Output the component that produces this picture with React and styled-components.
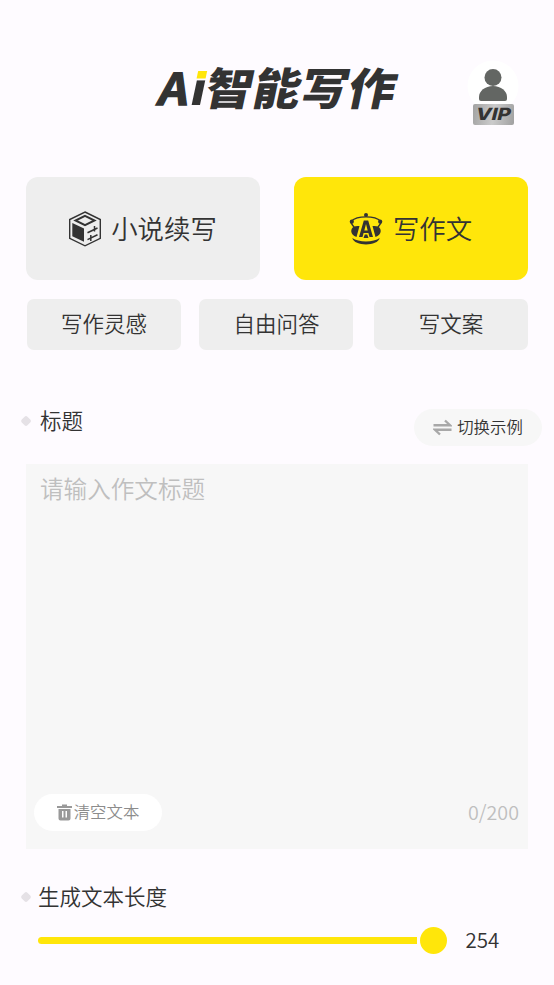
import React, { useState } from 'react';
import styled, { createGlobalStyle } from 'styled-components';

const GlobalStyle = createGlobalStyle`
  * {
    box-sizing: border-box;
  }
  body {
    margin: 0;
    background-color: #fefbff;
    color: #333;
    font-family: 'Noto Sans CJK SC', sans-serif;
    font-weight: 350;
  }
  button,
  textarea {
    border: none;
    padding: 0;
    color: inherit;
    font-family: inherit;
    font-weight: inherit;
  }
`;

const Page = styled.main`
  width: 554px;
  height: 985px;
  overflow: hidden;
`;

const Header = styled.header`
  display: flex;
  justify-content: flex-end;
  height: 177px;
  padding: 60px 35px 0 0;
`;

const Logo = styled.h1`
  display: flex;
  width: 240px;
  height: 52px;
  margin: 0 67px 0 0;
  font-size: 47.5px;
  font-weight: 900;
  line-height: 51px;
  white-space: nowrap;
  transform: skewX(-12deg) scaleY(0.93);
`;

const LogoLatin = styled.span`
  display: flex;
  width: 47px;
  font-size: 47px;
  font-weight: 700;
  letter-spacing: 2px;
  -webkit-text-stroke: 1.4px #333;
`;

/* the round dot is clipped away and a square one is put in its place */
const LogoI = styled.span`
  position: relative;
  color: transparent;
  background: linear-gradient(transparent 20px, #333 20px);
  background-clip: text;
  font-weight: 900;
  -webkit-text-stroke: 0;

  &::before {
    content: '';
    position: absolute;
    top: 10px;
    left: 3px;
    width: 9px;
    height: 8px;
    background-color: #ffe60a;
  }
`;

const Profile = styled.div`
  display: flex;
  flex-direction: column;
  align-items: center;
  width: 52px;
`;

const Avatar = styled.div`
  width: 52px;
  height: 44px;

  svg {
    display: block;
  }
`;

const VipBadge = styled.span`
  z-index: 1;
  width: 41px;
  height: 21px;
  border-radius: 2px;
  background: linear-gradient(100deg, #a2a2a2, #cbcbcb 50%, #a0a0a0);
  font: 800 17px/21px Inter, sans-serif;
  text-align: center;

  span {
    display: block;
    transform: skewX(-14deg) scaleX(1.2);
  }
`;

const ModeRow = styled.nav`
  display: flex;
  justify-content: space-between;
  padding: 0 26px;
`;

const Label = styled.span`
  display: block;
  padding-bottom: 3px;
`;

const ModeButton = styled.button`
  display: flex;
  align-items: center;
  justify-content: center;
  gap: ${({ $gap }) => $gap}px;
  width: 234px;
  height: 103px;
  padding-right: 1px;
  border-radius: 12px;
  background-color: ${({ $active }) => ($active ? '#ffe60a' : '#eee')};
  font-size: 26.4px;
`;

const TopicRow = styled.nav`
  display: grid;
  grid-template-columns: 172.4px 174.6px 154px;
  margin-top: 18.5px;
  padding-left: 27px;
`;

const TopicButton = styled.button`
  width: 154px;
  height: 51.5px;
  border-radius: 7px;
  background-color: #eee;
  font-size: 21.5px;
`;

const SectionHead = styled.div`
  display: flex;
  justify-content: space-between;
  height: 55px;
  margin-top: 59px;
  padding: 0 12px 0 22px;
`;

const SectionTitle = styled.h2`
  display: flex;
  align-items: center;
  gap: ${({ $gap }) => $gap}px;
  height: 24px;
  margin: 0;
  font-size: 21.5px;
  font-weight: inherit;

  &::before {
    content: '';
    width: 8px;
    height: 8px;
    border-radius: 2px;
    background-color: #e5e1e6;
    transform: rotate(45deg);
  }
`;

const PillButton = styled.button`
  display: flex;
  align-items: center;
  justify-content: center;
  gap: ${({ $gap }) => $gap}px;
  width: 128px;
  height: 37px;
  border-radius: 19px;
  background-color: ${({ $light }) => ($light ? '#fff' : '#f7f7f7')};
  color: ${({ $light }) => ($light ? '#8c8c8c' : '#333')};
  font-size: 16.4px;
`;

const Editor = styled.section`
  display: flex;
  flex-direction: column;
  height: 385px;
  margin: 0 26px;
  padding: 7px 9px 18px 8px;
  background-color: #f7f7f7;
`;

const TextInput = styled.textarea`
  flex: 1;
  padding: 0 6px;
  outline: none;
  resize: none;
  background: transparent;
  font-size: 23.6px;
  line-height: 34px;

  &::placeholder {
    color: #bfbfbf;
  }
`;

const EditorFooter = styled.div`
  display: flex;
  align-items: center;
  justify-content: space-between;
`;

const Counter = styled.span`
  padding-bottom: 2px;
  color: #bfbfbf;
  font-size: 19.7px;
`;

const LengthSection = styled.section`
  padding: 36px 22px 0;
`;

const SliderRow = styled.div`
  display: flex;
  align-items: center;
  height: 30px;
  margin-top: 16.5px;
  padding-left: 16px;
`;

const Track = styled.div`
  width: 379px;
  height: 7px;
  border-radius: 4px 0 0 4px;
  background-color: #ffe60a;
`;

const Thumb = styled.div`
  width: 27px;
  height: 27px;
  margin: 0 19px 0 2.5px;
  border-radius: 50%;
  background-color: #ffe60a;
`;

const SliderValue = styled(Label)`
  font-size: 20.5px;
`;

const PersonIcon = () => (
  <svg width='52' height='52' viewBox='0 0 52 52'>
    <circle cx='26' cy='26' r='25.5' fill='#fff' />
    <circle cx='26' cy='17.5' r='8.5' fill='#636663' />
    <path
      d='M12 39v-2c0-6 6-11 14-11s14 5 14 11v2q0 2-2 2H14q-2 0-2-2Z'
      fill='#636663'
    />
  </svg>
);

const CubeIcon = () => (
  <svg width='34' height='36' viewBox='0 0 34 36' fill='none' stroke='#333'>
    <path d='M17 1 32.3 8.5v18.8L17 34.8 1.7 27.3V8.5Z' strokeWidth='1.4' />
    <path d='M17 4.8 26.5 9.5 17 14.2 7.5 9.5Z' strokeWidth='2' />
    <path d='M4.3 12 16 17.5v13.3L4.3 25.3Z' fill='#333' stroke='none' />
    <path
      d='M19.5 21.8 29.5 17M26.500 15v5.500M19.500 28.600 29.500 23.800M22.800 24v6'
      strokeWidth='1.5'
    />
  </svg>
);

const WriterIcon = () => (
  <svg width='34' height='34' viewBox='0 0 34 34' fill='none' stroke='#333'>
    <path
      d='M5 15C2 11 1.5 10 2.5 9 8 3.5 26 3.5 31.5 9c1 1 .5 2-2.5 6'
      strokeWidth='1.4'
    />
    <g fill='#333' stroke='none'>
      <circle cx='17' cy='3' r='2' />
      <circle cx='2.8' cy='9.7' r='2.1' />
      <circle cx='31.2' cy='9.7' r='2.1' />
      <path d='M10.500 14 7.500 25C1 23 1 16.500 5 14.500q2-.8 5.500-.5ZM23.500 14 26.500 25c6.500-2 6.500-8.500 2.500-10.500q-2-.8-5.500-.5Z' />
      <path d='M15.800 22.500h2.400L19.500 26h-5ZM3.300 26c6 4.600 21.400 4.600 27.400 0-2 8.500-25.400 8.500-27.400 0Z' />
      <path
        d='M14.800 8.500h4.400L24 25h-3.500L19.400 21h-4.800l-1.100 4H10ZM17 12 15.300 18.500h3.400Z'
        fillRule='evenodd'
      />
    </g>
  </svg>
);

const SwapIcon = () => (
  <svg width='19' height='17' viewBox='0 0 19 17'>
    <path
      d='M.5 6.2H17L12 1.5M18.5 10.8H2L7 15.5'
      fill='none'
      stroke='#a8a8a8'
      strokeWidth='2.4'
    />
  </svg>
);

const TrashIcon = () => (
  <svg width='15' height='17' viewBox='0 0 15 17'>
    <path
      d='M0 2H5V.5h5V2h5v2H0ZM1.5 5h12v9.5q0 2-2 2h-8q-2 0-2-2ZM5 7v6.5h1.5V7ZM8.5 7v6.500H10V7Z'
      fill='#999'
      fillRule='evenodd'
    />
  </svg>
);

const topics = ['写作灵感', '自由问答', '写文案'];

export default function App() {
  const [text, setText] = useState('');

  return (
    <Page>
      <GlobalStyle />
      <Header>
        <Logo>
          <LogoLatin>
            A<LogoI>i</LogoI>
          </LogoLatin>
          智能写作
        </Logo>
        <Profile>
          <Avatar>
            <PersonIcon />
          </Avatar>
          <VipBadge>
            <span>VIP</span>
          </VipBadge>
        </Profile>
      </Header>

      <ModeRow>
        <ModeButton $gap={9}>
          <CubeIcon />
          <Label>小说续写</Label>
        </ModeButton>
        <ModeButton $active $gap={10}>
          <WriterIcon />
          <Label>写作文</Label>
        </ModeButton>
      </ModeRow>
      <TopicRow>
        {topics.map((topic) => (
          <TopicButton key={topic}>
            <Label>{topic}</Label>
          </TopicButton>
        ))}
      </TopicRow>

      <SectionHead>
        <SectionTitle $gap={10}>
          <Label>标题</Label>
        </SectionTitle>
        <PillButton $gap={5}>
          <SwapIcon />
          <Label>切换示例</Label>
        </PillButton>
      </SectionHead>
      <Editor>
        <TextInput
          placeholder='请输入作文标题'
          maxLength={200}
          value={text}
          onChange={(e) => setText(e.target.value)}
        />
        <EditorFooter>
          <PillButton $light $gap={2} onClick={() => setText('')}>
            <TrashIcon />
            <Label>清空文本</Label>
          </PillButton>
          <Counter>{text.length}/200</Counter>
        </EditorFooter>
      </Editor>

      <LengthSection>
        <SectionTitle $gap={8}>
          <Label>生成文本长度</Label>
        </SectionTitle>
        <SliderRow>
          <Track />
          <Thumb />
          <SliderValue>254</SliderValue>
        </SliderRow>
      </LengthSection>
    </Page>
  );
}
